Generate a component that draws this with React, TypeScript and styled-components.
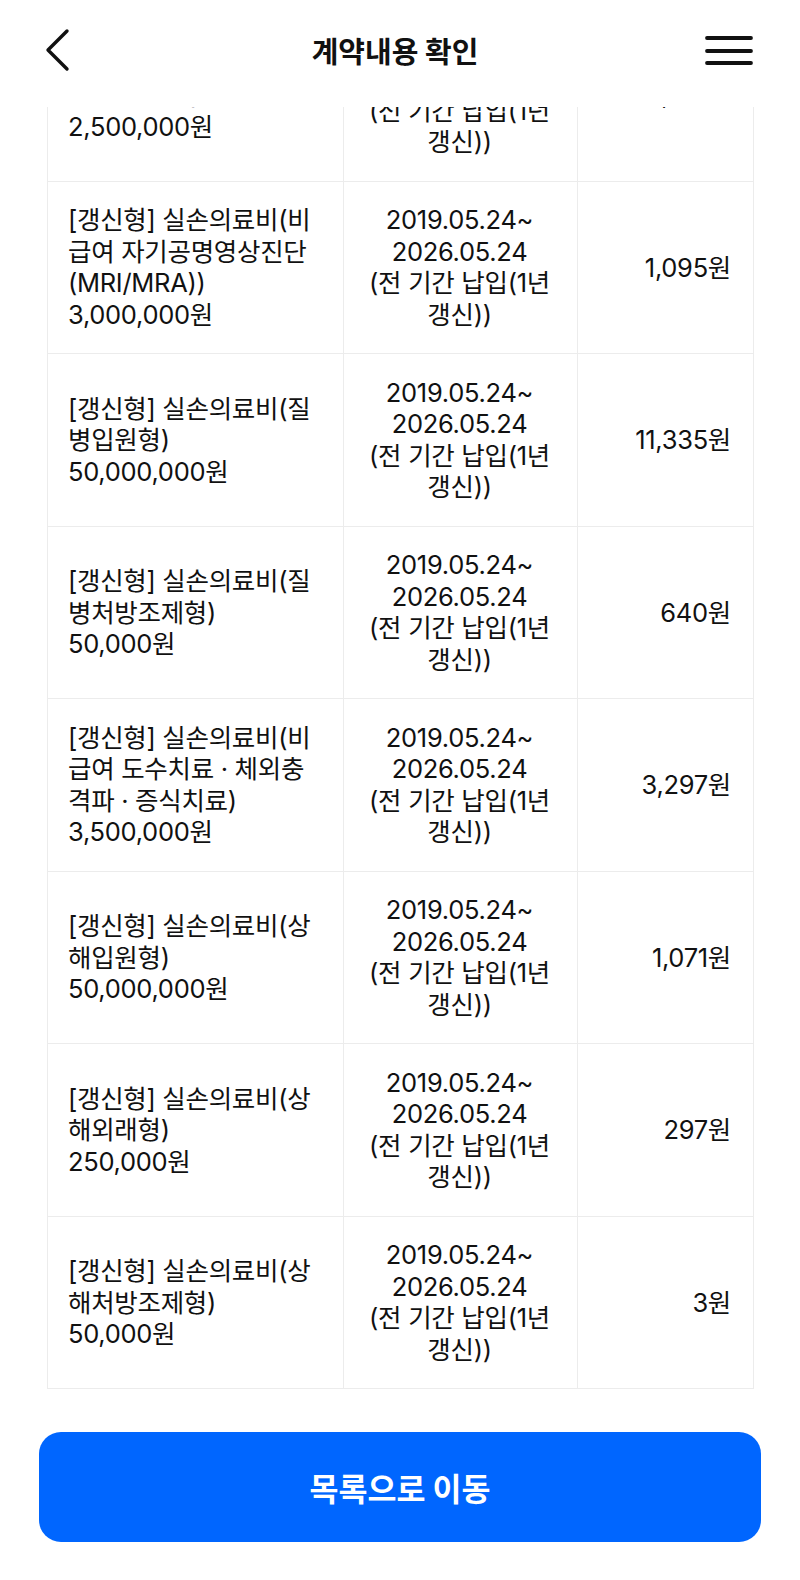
import styled, { createGlobalStyle } from "styled-components"

const GlobalStyle = createGlobalStyle`
  html, body {
    margin: 0;
    padding: 0;
    background: #ffffff;
  }
  body {
    font-family: "Inter", "Noto Sans CJK KR", sans-serif;
    color: #111111;
    -webkit-font-smoothing: antialiased;
  }
`

type Coverage = {
  name: string
  amount: string
  period: string
  premium: string
}

const PERIOD = "2019.05.24~\n2026.05.24\n(전 기간 납입(1년\n갱신))"

const rows: Coverage[] = [
  { name: "[갱신형] 실손의료비(비\n급여 주사료)", amount: "2,500,000원", period: PERIOD, premium: "1,160원" },
  { name: "[갱신형] 실손의료비(비\n급여 자기공명영상진단\n(MRI/MRA))", amount: "3,000,000원", period: PERIOD, premium: "1,095원" },
  { name: "[갱신형] 실손의료비(질\n병입원형)", amount: "50,000,000원", period: PERIOD, premium: "11,335원" },
  { name: "[갱신형] 실손의료비(질\n병처방조제형)", amount: "50,000원", period: PERIOD, premium: "640원" },
  { name: "[갱신형] 실손의료비(비\n급여 도수치료 · 체외충\n격파 · 증식치료)", amount: "3,500,000원", period: PERIOD, premium: "3,297원" },
  { name: "[갱신형] 실손의료비(상\n해입원형)", amount: "50,000,000원", period: PERIOD, premium: "1,071원" },
  { name: "[갱신형] 실손의료비(상\n해외래형)", amount: "250,000원", period: PERIOD, premium: "297원" },
  { name: "[갱신형] 실손의료비(상\n해처방조제형)", amount: "50,000원", period: PERIOD, premium: "3원" }
]

const Page = styled.div`
  width: 800px;
  min-height: 1580px;
  background: #ffffff;
`

const Header = styled.header`
  position: fixed;
  top: 0;
  left: 0;
  width: 800px;
  height: 107px;
  background: #ffffff;
  z-index: 10;
  display: grid;
  grid-template-columns: 1fr auto 1fr;
  align-items: start;
  padding: 26px 47px 0 40px;
  box-sizing: border-box;
`

const HeaderButton = styled.button<{ $side: "start" | "end" }>`
  justify-self: ${({ $side }) => $side};
  border: none;
  background: none;
  padding: 0;
  margin: 0;
  height: 48px;
  display: flex;
  align-items: center;
  justify-content: center;
  cursor: pointer;
`

const Title = styled.h1`
  margin: 0 0 0 -3px;
  height: 48px;
  display: flex;
  align-items: center;
  font-family: "Noto Sans CJK KR", sans-serif;
  font-size: 29px;
  font-weight: 600;
  color: #111111;
  padding-bottom: 2px;
`

const Content = styled.main`
  padding: 8px 39px 0 39px;
  display: flex;
  flex-direction: column;
  gap: 43px;
`

const TableWrap = styled.div`
  padding: 0 8px;
`

const Table = styled.table`
  width: 706px;
  border-collapse: collapse;
  table-layout: fixed;
  border: 1px solid #ececec;
`

const Row = styled.tr`
  border-bottom: 1px solid #ececec;
`

const Cell = styled.td<{ $align: "left" | "center" | "right" }>`
  padding: 22.75px 22px 22.75px 20px;
  border-right: 1px solid #ececec;
  vertical-align: middle;
  text-align: ${({ $align }) => $align};
  font-size: 25.5px;
  line-height: 31.5px;
  color: #111111;
  white-space: pre-line;
  letter-spacing: -0.3px;
`

const Amount = styled.div`
  white-space: nowrap;
`

const PrimaryButton = styled.button`
  height: 110px;
  width: 722px;
  border: none;
  border-radius: 22px;
  background: #0066ff;
  color: #ffffff;
  font-family: "Noto Sans CJK KR", sans-serif;
  font-size: 31.5px;
  font-weight: 600;
  cursor: pointer;
`

const BackIcon = () => (
  <svg width="36" height="48" viewBox="0 0 36 48" fill="none">
    <polyline
      points="27,5 8,24 27,43"
      stroke="#111111"
      strokeWidth="3.4"
      strokeLinecap="round"
      strokeLinejoin="round"
    />
  </svg>
)

const MenuIcon = () => (
  <svg width="48" height="36" viewBox="0 0 48 36" fill="none">
    <g stroke="#111111" strokeWidth="3.8" strokeLinecap="round">
      <line x1="2" y1="6" x2="46" y2="6" />
      <line x1="2" y1="19" x2="46" y2="19" />
      <line x1="2" y1="31" x2="46" y2="31" />
    </g>
  </svg>
)

export default function App() {
  return (
    <Page>
      <GlobalStyle />
      <Header>
        <HeaderButton $side="start" aria-label="뒤로">
          <BackIcon />
        </HeaderButton>
        <Title>계약내용 확인</Title>
        <HeaderButton $side="end" aria-label="메뉴">
          <MenuIcon />
        </HeaderButton>
      </Header>
      <Content>
        <TableWrap>
          <Table>
            <colgroup>
              <col style={{ width: 296 }} />
              <col style={{ width: 234 }} />
              <col style={{ width: 176 }} />
            </colgroup>
            <tbody>
              {rows.map((row, i) => (
                <Row key={i}>
                  <Cell $align="left">
                    {row.name}
                    <Amount>{row.amount}</Amount>
                  </Cell>
                  <Cell $align="center">{row.period}</Cell>
                  <Cell $align="right">{row.premium}</Cell>
                </Row>
              ))}
            </tbody>
          </Table>
        </TableWrap>
        <PrimaryButton>목록으로 이동</PrimaryButton>
      </Content>
    </Page>
  )
}
